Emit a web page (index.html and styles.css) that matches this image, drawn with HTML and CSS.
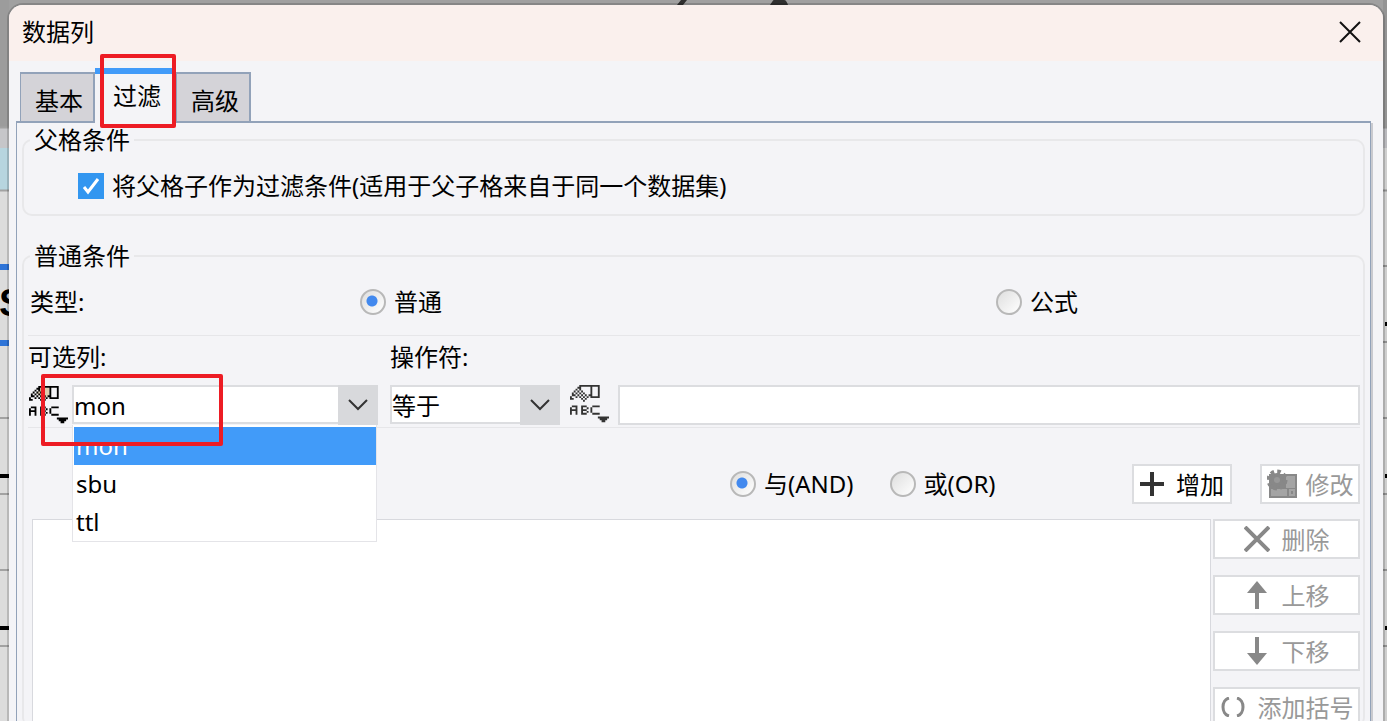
FILE: index.html
```html
<!DOCTYPE html>
<html lang="zh-CN">
<head>
<meta charset="utf-8">
<title>数据列</title>
<link rel="stylesheet" href="styles.css">
</head>
<body>
<svg width="0" height="0" class="defs" aria-hidden="true">
  <symbol id="abc" viewBox="0 0 21 21">
    <path d="M5 0h11v1H5zM4 1h2v1H4zM3 2h1v1H3zM5 2h1v1H5zM2 3h1v1H2zM4 3h1v1H4zM6 3h1v1H6zM1 4h1v1H1zM3 4h1v1H3zM5 4h1v1H5zM7 4h1v1H7zM1 5h1v1H1zM2 5h1v1H2zM4 5h1v1H4zM6 5h1v1H6zM8 5h1v1H8zM10 5h1v1h-1zM0 6h1v1H0zM3 6h1v1H3zM5 6h1v1H5zM7 6h1v1H7zM9 6h1v1H9zM0 7h2v1H0zM6 7h1v1H6zM8 7h1v1H8zM7 8h1v1H7zM11 1h1v6h-1zM15 1h1v6h-1zM12 6h3v1h-3z" fill="currentColor"/>
    <path d="M1 11h3v5H3v-2H1v2H0v-4h1v1h2v-1H1zM6 11h3v1h1v1H9v1h1v1H9v1H6zM7 12v1h2v-1zM7 14v1h2v-1zM12 11h4v1h-4v3h4v1h-4v-1h-1v-3h1z" fill="currentColor" fill-rule="evenodd"/>
    <path d="M15 17h6v1h-1v1h-1v1h-2v-1h-1v-1h-1z" fill="currentColor"/>
  </symbol>
</svg>

<svg class="behind behind-left" width="9" height="721" aria-hidden="true">
  <rect width="9" height="127" fill="#9c9c9c"/>
  <rect y="127" width="9" height="21" fill="#c6c6c9"/>
  <rect y="148" width="9" height="42" fill="#b7d5df"/>
  <rect y="190" width="9" height="531" fill="#dcdcdc"/>
  <path d="M0 127.500h9M0 190.500h9M0 418h9M0 494h9M0 570h9M0 646h9" stroke="#a2a2a2" stroke-width="2"/>
  <path d="M0 267h9M0 343h9" stroke="#2e74d8" stroke-width="6"/>
  <path d="M0 476h9M0 628h9" stroke="#000" stroke-width="4"/>
</svg>
<span class="behind-text" aria-hidden="true">S</span>
<svg class="behind behind-right" width="4" height="721" aria-hidden="true">
  <rect width="4" height="127" fill="#949494"/>
  <rect y="127" width="4" height="21" fill="#b9b9bd"/>
  <rect y="148" width="4" height="573" fill="#cfcfcf"/>
  <path d="M0 127.500h4M0 190.500h4M0 266h4M0 342h4M0 418h4M0 494h4M0 570h4M0 646h4" stroke="#929292" stroke-width="2"/>
  <path d="M2 324h2M2 476h2M2 628h2" stroke="#000" stroke-width="4"/>
</svg>
<svg class="behind behind-top" width="120" height="5" aria-hidden="true">
  <path d="M0 5l4-5h6l-4 5zM93 5c2-3 3-5 4-5h10c2 0 3 2 4 5z" fill="#303030"/>
</svg>

<main class="dialog">
  <header class="titlebar">
    <h1>数据列</h1>
    <button class="close" aria-label="关闭"><svg width="22" height="22" viewBox="0 0 22 22"><path d="M1 1l20 20M21 1L1 21" stroke="#111" stroke-width="2"/></svg></button>
  </header>
  <div class="body">
    <nav class="tabs" role="tablist">
      <button class="tab" role="tab">基本</button>
      <button class="tab active" role="tab" aria-selected="true">过滤<span class="mark mark-tab"></span></button>
      <button class="tab" role="tab">高级</button>
    </nav>
    <section class="panel">
      <fieldset class="parent">
        <legend>父格条件</legend>
        <label class="option check"><input type="checkbox" checked><svg class="tick" width="18" height="18" viewBox="0 0 18 18" aria-hidden="true"><path d="M2 10l4 5L16 2" fill="none" stroke="#fff" stroke-width="3"/></svg>将父格子作为过滤条件(适用于父子格来自于同一个数据集)</label>
      </fieldset>
      <fieldset class="normal">
        <legend>普通条件</legend>
        <div class="types">
          <span class="caption">类型:</span>
          <label class="option"><input type="radio" name="type" checked>普通</label>
          <label class="option"><input type="radio" name="type">公式</label>
        </div>
        <div class="fields">
          <div class="field column">
            <label for="col">可选列:</label>
            <div class="row">
              <button class="kind tinted" aria-label="列类型"><svg width="39" height="39" viewBox="0 0 21 21"><path d="M6 1h5v4l-3 2-4-3z" fill="#dccdb0"/><use href="#abc"/></svg></button>
              <div class="combo">
                <select id="col"><option>mon</option><option>sbu</option><option>ttl</option></select>
                <svg class="arrow" width="40" height="40" viewBox="0 0 40 40" aria-hidden="true"><path d="M11 15l9 9 9-9" fill="none" stroke="#333" stroke-width="2"/></svg>
                <ul class="menu" role="listbox">
                  <li role="option" aria-selected="true" class="chosen">mon</li>
                  <li role="option">sbu</li>
                  <li role="option">ttl</li>
                </ul>
              </div>
            </div>
            <span class="mark mark-column"></span>
          </div>
          <div class="field operator">
            <label for="op">操作符:</label>
            <div class="row">
              <div class="combo">
                <select id="op"><option>等于</option></select>
                <svg class="arrow" width="40" height="40" viewBox="0 0 40 40" aria-hidden="true"><path d="M11 15l9 9 9-9" fill="none" stroke="#333" stroke-width="2"/></svg>
              </div>
              <button class="kind soft" aria-label="值类型"><svg width="39" height="39"><use href="#abc"/></svg></button>
              <input class="value" type="text" aria-label="值">
            </div>
          </div>
        </div>
        <div class="joins">
          <label class="option"><input type="radio" name="join" checked>与(AND)</label>
          <label class="option"><input type="radio" name="join">或(OR)</label>
          <div class="actions">
            <button class="btn"><svg width="24" height="24" viewBox="0 0 24 24"><path d="M12 0v24M0 12h24" stroke="#333" stroke-width="4"/></svg>增加</button>
            <button class="btn" disabled><svg width="30" height="30" viewBox="0 0 30 30"><path d="M2 5h28v24H2z" fill="#888"/><path d="M4 20h16v7H4zM19 7h9v12h-9z" fill="#a4a4a4"/><path d="M23 21h4v5h-4z" fill="none" stroke="#a4a4a4" stroke-width="2"/><circle cx="10" cy="11" r="7" fill="#888"/><circle cx="10" cy="11" r="8" fill="none" stroke="#888" stroke-width="5" stroke-dasharray="3.300 2.980"/><circle cx="10" cy="11" r="3" fill="#989898"/></svg>修改</button>
          </div>
        </div>
        <div class="result">
          <div class="list" role="listbox" aria-label="条件列表"></div>
          <div class="side">
            <button class="btn" disabled><svg width="26" height="26" viewBox="0 0 26 26"><path d="M1 1l24 24M25 1L1 25" stroke="#888" stroke-width="4"/></svg>删除</button>
            <button class="btn" disabled><svg width="26" height="28" viewBox="0 0 26 28"><path d="M13 6v22" stroke="#888" stroke-width="4"/><path d="M13 0l10 12H3z" fill="#888"/></svg>上移</button>
            <button class="btn" disabled><svg width="26" height="28" viewBox="0 0 26 28"><path d="M13 0v22" stroke="#888" stroke-width="4"/><path d="M13 28l10-12H3z" fill="#888"/></svg>下移</button>
            <button class="btn" disabled><svg width="26" height="20" viewBox="0 0 26 20"><path d="M9 1C1 3 1 17 9 19M17 1c8 2 8 16 0 18" fill="none" stroke="#888" stroke-width="3"/></svg>添加括号</button>
          </div>
        </div>
      </fieldset>
    </section>
  </div>
</main>
</body>
</html>
```

FILE: styles.css
```css
* { box-sizing: border-box; }
html, body { height: 100%; }
body {
  margin: 0;
  overflow: hidden;
  background: #a0a0a0;
  color: #000;
  font-family: "Noto Sans", "Noto Sans CJK SC", sans-serif;
  font-size: 24px;
  font-weight: 380;
  line-height: 34px;
}
button, input, select { font: inherit; color: inherit; margin: 0; }
svg { display: block; flex: none; }
.defs { position: absolute; }

/* window lying behind the dialog */
.behind { position: absolute; top: 0; }
.behind-left { left: 0; }
.behind-right { right: 0; }
.behind-top { left: 677px; }
.behind-text {
  position: absolute;
  left: -1px;
  top: 283px;
  font: bold 38px/40px "Liberation Sans", sans-serif;
}

.dialog {
  position: relative;
  display: flex;
  flex-direction: column;
  height: calc(100% - 5px);
  margin: 5px 4px 0 9px;
  border-radius: 14px 14px 0 0;
  background: #f4f4f7;
  box-shadow: 0 0 0 2px rgba(0, 0, 0, 0.16);
  overflow: hidden;
}
.titlebar {
  display: flex;
  justify-content: space-between;
  align-items: center;
  flex: none;
  height: 56px;
  padding: 0 22px 2px 13px;
  background: #faf0ed;
}
.titlebar h1 { margin: 0; font-size: 24px; font-weight: inherit; }
.close { padding: 0; border: 0; background: none; }
.body {
  flex: 1;
  display: flex;
  flex-direction: column;
  min-height: 0;
  padding: 7px 12px 0 7px;
}

.tabs { display: flex; align-items: flex-end; flex: none; padding-left: 4px; }
.tab {
  height: 49px;
  padding: 6px 10px 0 14px;
  border: 2px solid #92a2b9;
  border-bottom: 0;
  border-left-width: 1px;
  background: #d4d3d8;
}
.tab.active {
  position: relative;
  height: 55px;
  margin-bottom: -2px;
  padding: 0 15px 6px 18px;
  border: 0;
  border-top: 6px solid #419bf9;
  background: #f4f4f7;
}
.panel {
  flex: 1;
  display: flex;
  flex-direction: column;
  min-height: 0;
  padding: 0 5px;
  border: 1px solid #92a2b9;
  border-top-width: 2px;
  border-bottom: 0;
  box-shadow: 2px 2px 0 #c9cacf;
}

fieldset {
  min-width: 0;
  margin: 0;
  border: 2px solid #e8e8ea;
  border-radius: 10px;
}
legend { margin: 0 0 0 2px; padding: 0 4px; }
.parent { padding: 16px 4px 15px; }
.normal {
  flex: 1;
  margin-top: 23px;
  padding: 16px 3px 0 4px;
  border-bottom: 0;
}

.option {
  position: relative;
  display: inline-flex;
  align-items: center;
  gap: 8px;
  height: 26px;
  white-space: nowrap;
}
.check { display: flex; margin-left: 50px; }
.option input { appearance: none; width: 26px; height: 26px; flex: none; }
.option input[type=checkbox] { background: #3296f0; }
.tick { position: absolute; left: 4px; top: 4px; }
.option input[type=radio] {
  border: 2px solid #b8b8b8;
  border-radius: 50%;
  background: linear-gradient(135deg, #dedede, #fff);
}
.option input[type=radio]:checked {
  background: radial-gradient(circle at 10px 10px, #4289ee 0 5px, transparent 6px), linear-gradient(135deg, #dedede, #fff);
}

.types {
  display: grid;
  grid-template-columns: 332fr 636fr 364fr;
  align-items: center;
  padding-bottom: 20px;
  border-bottom: 1px solid #e6e6e9;
}
.caption { padding-left: 2px; line-height: 26px; }

.fields { display: flex; gap: 12px; padding: 4px 0 2px; border-bottom: 1px solid #e6e6e9; }
.field { position: relative; }
.field label { display: block; }
.column { width: 350px; }
.operator { flex: 1; min-width: 0; }
.row { display: flex; margin-top: 11px; }
.column .row { gap: 4px; }
.operator .row { gap: 9px; }
.kind { width: 40px; height: 40px; padding: 0 0 1px 1px; border: 0; background: none; color: #000; }
.kind.tinted { padding: 1px 0 0 1px; }
.kind.soft { color: #333; }
.combo { position: relative; flex: 1; height: 40px; }
.operator .combo { flex: none; width: 170px; }
.combo select {
  appearance: none;
  width: 100%;
  height: 39px;
  padding: 2px 40px 0 0;
  border: 2px solid #dcdde0;
  border-radius: 0;
  background: #fff;
}
.arrow { position: absolute; right: 0; top: 0; background: #d8d9dc; pointer-events: none; }
.value { flex: 1; min-width: 0; height: 40px; border: 2px solid #dcdde0; background: #fff; }
.menu {
  position: absolute;
  z-index: 1;
  top: 40px;
  left: 0;
  right: 1px;
  margin: 0;
  padding: 2px 0 0;
  border: 1px solid #e4e4e8;
  border-top: 0;
  background: #fff;
  list-style: none;
}
.menu li { height: 38px; padding-left: 3px; line-height: 38px; }
.menu .chosen { margin-left: 1px; padding-left: 2px; background: #419bf9; color: #fff; }

.joins { display: flex; align-items: center; gap: 36px; padding: 36px 0 15px 702px; }
.actions { display: flex; gap: 28px; margin-left: auto; }
.btn {
  display: flex;
  align-items: center;
  justify-content: center;
  gap: 12px;
  height: 40px;
  padding: 2px 3px 0;
  border: 2px solid #dcdde0;
  background: #fff;
  white-space: nowrap;
}
.btn svg { margin-bottom: 2px; }
.btn:disabled { color: #999; }
.actions .btn { width: 100px; }
.actions .btn:disabled { gap: 9px; }

.result { display: flex; gap: 2px; padding-left: 4px; }
.list { flex: 1; border: 1px solid #d8d9de; background: #fff; }
.side { display: flex; flex-direction: column; gap: 16px; width: 147px; }

/* red highlight frames */
.mark { position: absolute; z-index: 2; border: 4px solid #ed1c24; border-radius: 2px; pointer-events: none; }
.mark-tab { left: 5px; right: 0; top: -20px; bottom: -5px; }
.mark-column { left: 13px; top: 34px; width: 182px; height: 72px; }
```
